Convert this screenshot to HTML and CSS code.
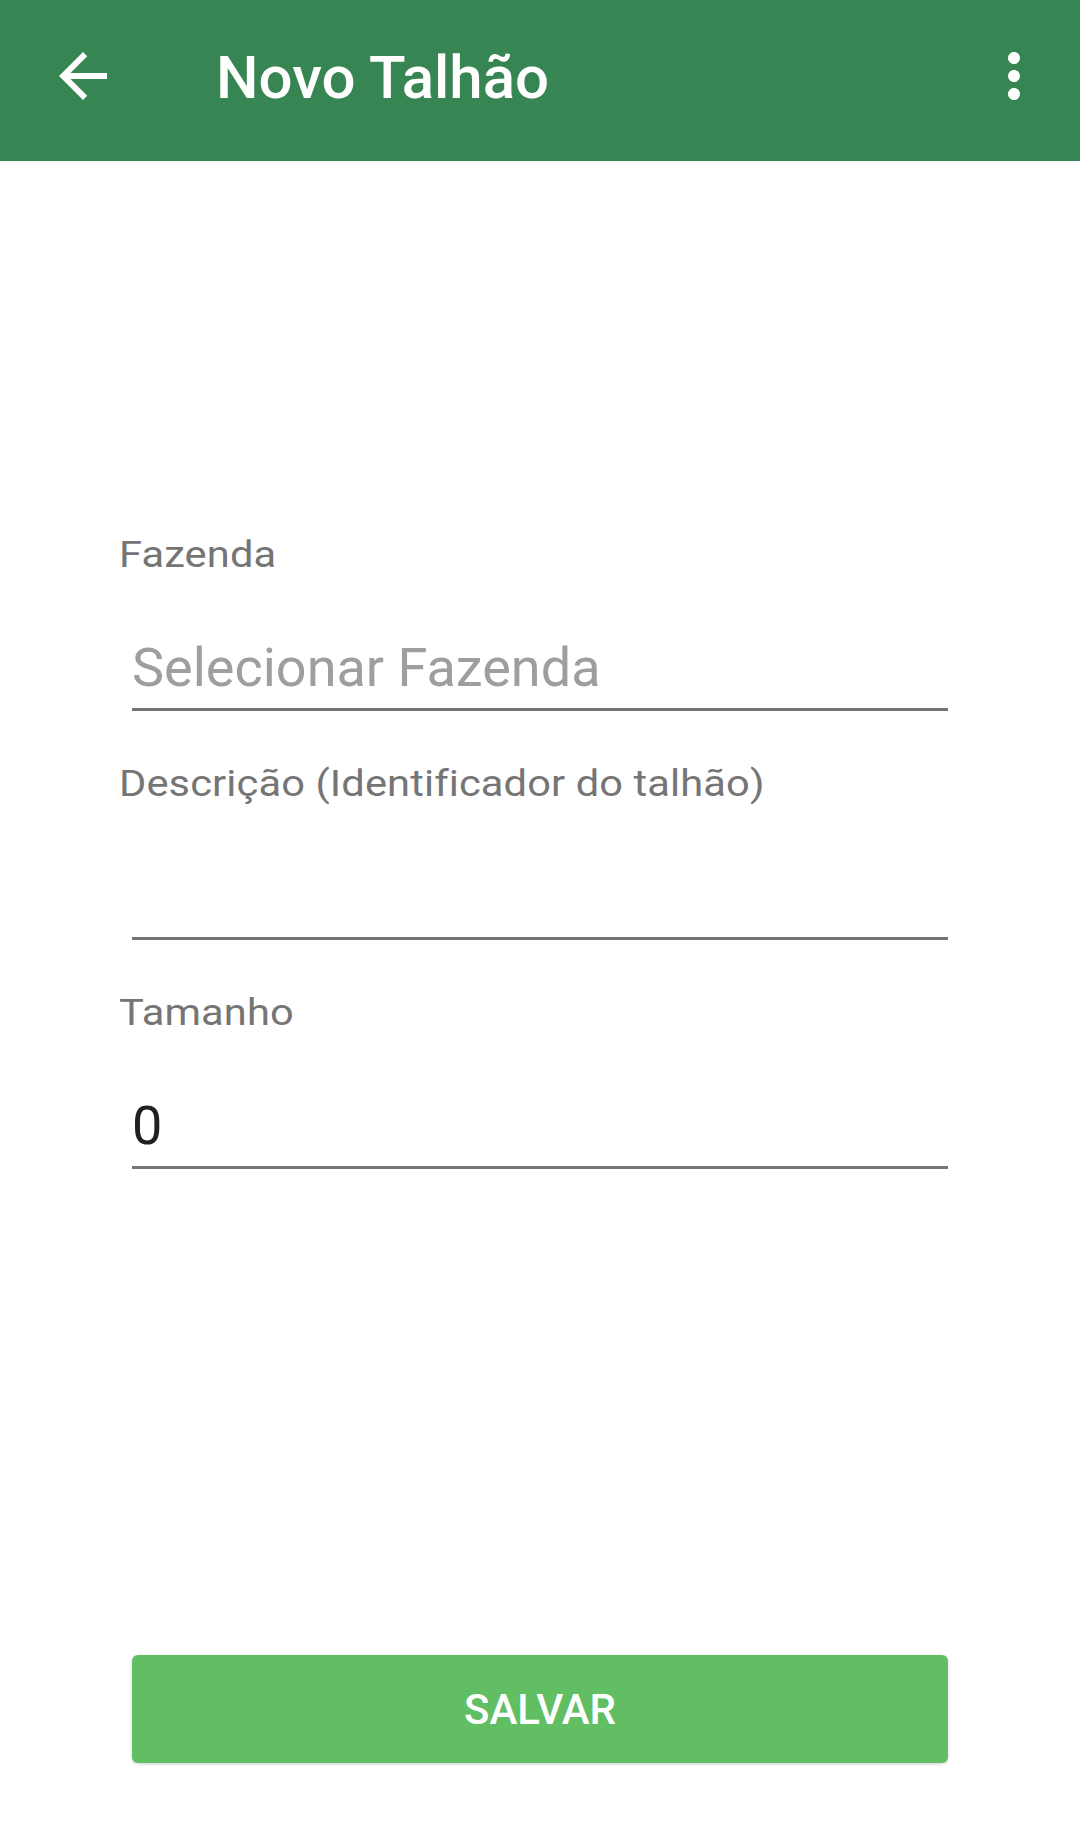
FILE: index.html
```html
<!DOCTYPE html>
<html lang="pt-BR">
<head>
<meta charset="utf-8">
<title>Novo Talhão</title>
<link rel="stylesheet" href="styles.css">
</head>
<body>
<div class="screen">
  <header class="appbar">
    <div class="icon-btn back">
      <svg viewBox="0 0 24 24" width="72" height="72"><path fill="#fff" d="M20 11H7.83l5.59-5.59L12 4l-8 8 8 8 1.41-1.41L7.83 13H20v-2z"/></svg>
    </div>
    <h1 class="title">Novo Talhão</h1>
    <div class="icon-btn more">
      <svg viewBox="0 0 24 24" width="72" height="72"><path fill="#fff" d="M12 8c1.1 0 2-.9 2-2s-.9-2-2-2-2 .9-2 2 .9 2 2 2zm0 2c-1.1 0-2 .9-2 2s.9 2 2 2 2-.9 2-2-.9-2-2-2zm0 6c-1.1 0-2 .9-2 2s.9 2 2 2 2-.9 2-2-.9-2-2-2z"/></svg>
    </div>
  </header>
  <main class="form">
    <div class="field">
      <div class="label"><span class="label-text">Fazenda</span></div>
      <div class="input placeholder">Selecionar Fazenda</div>
    </div>
    <div class="field">
      <div class="label"><span class="label-text">Descrição (Identificador do talhão)</span></div>
      <div class="input"></div>
    </div>
    <div class="field">
      <div class="label"><span class="label-text">Tamanho</span></div>
      <div class="input">0</div>
    </div>
    <button class="save">SALVAR</button>
  </main>
</div>
</body>
</html>
```
FILE: styles.css
```css
html, body {
  margin: 0;
  padding: 0;
  background: #ffffff;
}
body {
  font-family: Roboto, "Liberation Sans", sans-serif;
}
.screen {
  width: 1080px;
  height: 1841px;
  overflow: hidden;
  display: flex;
  flex-direction: column;
}
.appbar {
  height: 161px;
  box-sizing: border-box;
  padding-top: 40px;
  background: #378552;
  display: flex;
  align-items: flex-start;
  flex-shrink: 0;
}
.icon-btn {
  width: 72px;
  height: 72px;
}
.icon-btn svg {
  display: block;
}
.back {
  margin-left: 47px;
}
.title {
  margin: 2px 0 0 97px;
  font-size: 60px;
  line-height: 72px;
  font-weight: 500;
  color: #ffffff;
  flex: 1;
}
.more {
  margin-right: 30px;
}
.form {
  padding-top: 370px;
  display: flex;
  flex-direction: column;
}
.field {
  display: flex;
  flex-direction: column;
  margin-bottom: 49px;
}
.label {
  padding-left: 119px;
  font-size: 37px;
  line-height: 48px;
  letter-spacing: 0.1px;
  color: #757575;
}
.label-text {
  display: inline-block;
  transform: scaleX(1.125);
  transform-origin: 0 50%;
}
.input {
  margin: 53px 0 0 132px;
  width: 816px;
  height: 72px;
  padding-bottom: 4px;
  border-bottom: 3px solid #757575;
  font-size: 54px;
  line-height: 72px;
  color: #212121;
}
.input.placeholder {
  color: #9e9e9e;
}
.save {
  margin: 437px 0 0 132px;
  width: 816px;
  height: 108px;
  border: none;
  border-radius: 6px;
  background: #61be63;
  color: #ffffff;
  font-family: Roboto, "Liberation Sans", sans-serif;
  font-size: 42px;
  font-weight: 500;
  padding: 0;
  box-shadow: 0 1px 3px rgba(0,0,0,0.2);
}
```
